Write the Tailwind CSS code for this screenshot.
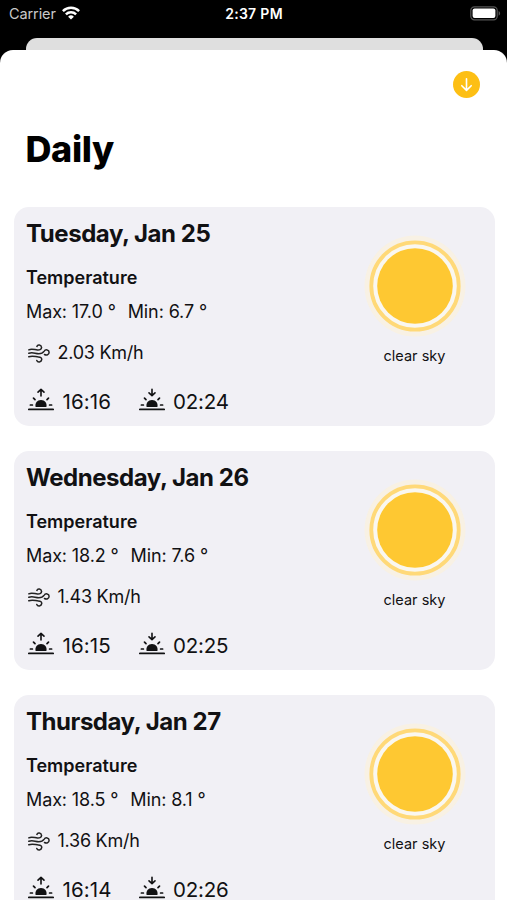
<!DOCTYPE html>
<html lang="en">
<head>
    <meta charset="UTF-8">
    <meta name="viewport" content="width=device-width, initial-scale=1.0">
    <title>Daily</title>
    <script src="https://cdn.jsdelivr.net/npm/@tailwindcss/browser@4"></script>
</head>
<body class="bg-black font-['Inter','Liberation_Sans',sans-serif] text-[#111113]">
    <div class="h-[900px] overflow-hidden flex flex-col">
        <!-- Status bar -->
        <div class="h-[38px] shrink-0 grid grid-cols-3 items-start pl-[9px] pr-[6px] pt-[4px] text-white">
            <div class="flex items-center gap-[6px] h-5">
                <span class="text-[14.5px] tracking-[-0.1px] text-[#c9c9c9]">Carrier</span>
                <svg class="w-[18px] h-[14px] -mt-[2px]" viewBox="0 0 18 14" fill="none" stroke="#fff" stroke-width="2.5">
                    <path d="M.9 5.1a11.6 11.6 0 0 1 16.2 0"/>
                    <path d="M3.9 8.3a7.3 7.3 0 0 1 10.2 0"/>
                    <path d="M9 13.6 6.1 10.7a4.1 4.1 0 0 1 5.8 0z" fill="#fff" stroke="none"/>
                </svg>
            </div>
            <div class="flex items-center justify-center h-5 pr-[2px] -mt-px text-[14px] tracking-[0.3px] font-semibold whitespace-nowrap">2:37 PM</div>
            <div class="flex items-center justify-end h-5">
                <svg class="w-[31px] h-[15px] -mt-[2px]" viewBox="0 0 31 15">
                    <rect x=".8" y=".8" width="26.4" height="13" rx="3.6" fill="none" stroke="#555" stroke-width="1.2"/>
                    <rect x="2.6" y="2.6" width="22.8" height="9.4" rx="2" fill="#fff"/>
                    <path d="M28.6 5v4.8c2-.9 2-3.9 0-4.8z" fill="#555"/>
                </svg>
            </div>
        </div>

        <!-- Sheet behind -->
        <div class="h-[12px] shrink-0 ml-[25.5px] mr-[24.5px] bg-[#dfdfdf] rounded-t-[11px]"></div>

        <!-- Daily sheet -->
        <div class="flex-1 min-h-0 bg-white rounded-t-[13px]">
            <div class="flex justify-end pt-[21px] pr-[27px]">
                <svg class="w-[27px] h-[27px]" viewBox="0 0 27 27" fill="none" stroke="#fff" stroke-width="1.6" stroke-linecap="round" stroke-linejoin="round">
                    <circle cx="13.5" cy="13.5" r="13.5" fill="#fdbf14" stroke="none"/>
                    <path d="M13.5 7.8v11.4M8.8 14.7l4.7 4.7 4.7-4.7"/>
                </svg>
            </div>
            <h1 class="mt-[29px] ml-[25.5px] h-11 leading-11 text-[36px] tracking-[-0.4px] font-extrabold text-black">Daily</h1>

            <div class="mt-[35.6px] pl-[13.5px] pr-[12.5px] flex flex-col gap-[24.6px]" id="days"></div>
        </div>
    </div>

    <script>
        const days = [
            { date: 'Tuesday, Jan 25', max: '17.0', min: '6.7', wind: '2.03', sunrise: '16:16', sunset: '02:24' },
            { date: 'Wednesday, Jan 26', max: '18.2', min: '7.6', wind: '1.43', sunrise: '16:15', sunset: '02:25' },
            { date: 'Thursday, Jan 27', max: '18.5', min: '8.1', wind: '1.36', sunrise: '16:14', sunset: '02:26' },
        ];

        // Half sun over the horizon, the arrow is the only difference between rise and set
        const horizon = (arrow) => `
            <svg class="w-[26px] h-[24px] shrink-0" viewBox="0 0 26 24" fill="none" stroke="#111113" stroke-width="1.7" stroke-linecap="round" stroke-linejoin="round">
                <path d="M.9 21.4h24.2" stroke-width="1.9"/>
                <path d="M7.6 18.9c-.9-3.9 1.6-7 5.4-7s6.3 3.1 5.4 7z" fill="#111113" stroke="none"/>
                <path d="M2.4 17h2M21.6 17h2M5.5 10.1l1.5 1.5M20.5 10.1l-1.5 1.5"/>
                <path d="${arrow}" stroke-width="1.6"/>
            </svg>`;

        const list = document.getElementById('days');
        days.forEach((day) => {
            list.innerHTML += `
                <div class="h-[219.6px] shrink-0 bg-[#f1f0f5] rounded-[15px] flex justify-between pl-[12.5px] pr-[33px]">
                    <div class="pt-[11px]">
                        <div class="h-8 leading-8 text-[24px] tracking-[-0.45px] font-bold whitespace-nowrap">${day.date}</div>
                        <div class="mt-4 h-6 leading-6 text-[18px] font-semibold">Temperature</div>
                        <div class="mt-[10px] h-6 leading-6 text-[18px] tracking-[-0.12px] flex gap-[12px] whitespace-nowrap">
                            <span>Max: ${day.max} °</span>
                            <span>Min: ${day.min} °</span>
                        </div>
                        <div class="mt-[17px] h-6 leading-6 text-[18px] tracking-[-0.25px] flex items-center gap-[8px]">
                            <svg class="w-[22px] h-[19px] ml-[1.5px] mt-[1px]" viewBox="0 0 22 19" fill="none" stroke="#222" stroke-width="1.5" stroke-linecap="round" stroke-linejoin="round">
                                <path d="M.8 5.8c3.2-1.6 5.6 0 8.6.3 2.6.2 4.3-1 4.1-2.9-.2-2.5-3.9-2.9-4.6-.8"/>
                                <path d="M.8 9.3c4-1.4 6.3.4 10 .4 3 0 4.2-.8 5.4-2.6 1.2-2 4.9-1.6 4.9 1.2 0 2.7-2.7 3.3-4.6 2.2"/>
                                <path d="M.8 12.7c4-1.5 6.7.1 9.5.2 2.6.1 3.6 1.2 3.4 2.8-.3 2.7-4.1 2.9-4.9.8"/>
                            </svg>
                            <span>${day.wind} Km/h</span>
                        </div>
                        <div class="mt-[21px] h-8 leading-8 text-[20.5px] flex items-center">
                            <div class="mb-[4px] ml-[2px]">${horizon('M13 8V1.6M10 4.2l3-2.8 3 2.8')}</div>
                            <span class="ml-[8.5px] w-[76px] tracking-[0.1px]">${day.sunrise}</span>
                            <div class="mb-[4px]">${horizon('M13 1.2v6.4M10 4.9l3 2.8 3-2.8')}</div>
                            <span class="ml-[8.5px] tracking-[-0.2px]">${day.sunset}</span>
                        </div>
                    </div>
                    <div class="pt-[27px] w-[94px] flex flex-col items-center">
                        <svg class="w-[104px] h-[104px] shrink-0" viewBox="0 0 104 104">
                            <circle cx="52" cy="52" r="50.5" fill="#f8f1e4"/>
                            <circle cx="52" cy="52" r="43.7" fill="#faf7ef" stroke="#ffd978" stroke-width="3.8"/>
                            <circle cx="52" cy="52" r="37.8" fill="#fec832"/>
                        </svg>
                        <div class="mt-[8px] h-5 leading-5 text-[14.5px] whitespace-nowrap">clear sky</div>
                    </div>
                </div>
            `;
        });
    </script>
</body>
</html>
